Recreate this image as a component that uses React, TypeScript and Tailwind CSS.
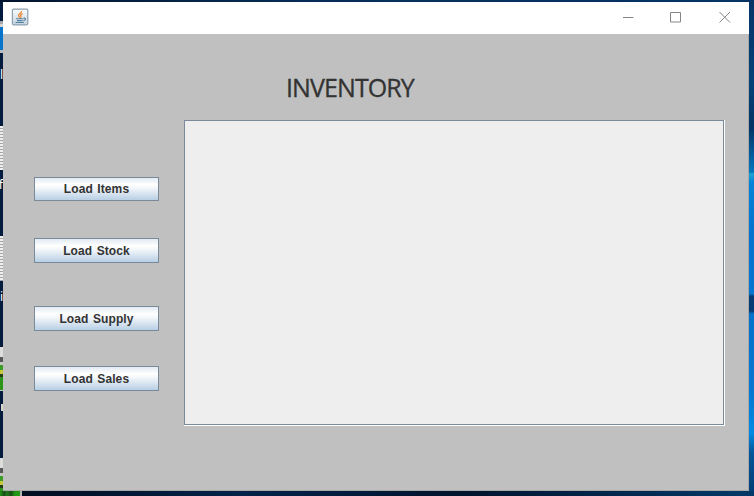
import React from "react";

function JavaIcon() {
  return (
    <svg width="18" height="18" viewBox="0 0 18 18" fill="none">
      <defs>
        <linearGradient id="tile" x1="0" y1="0" x2="0" y2="1">
          <stop offset="0" stopColor="#fafcfd" />
          <stop offset="1" stopColor="#c5d4df" />
        </linearGradient>
      </defs>
      <rect x="1.4" y="1.2" width="15.4" height="15.6" rx="1.2" fill="url(#tile)" stroke="#8ba0b0" strokeWidth="1.2" />
      <path d="M10.6 3C11.1 5.2 7 5.8 7.5 7.6C7.7 8.4 8.6 8.8 8.5 9.8M11.6 5.7C9.3 6.7 9.2 7.3 10 8.1C10.3 8.8 9.7 9.4 9.4 9.8" stroke="#e78632" strokeWidth="1.3" />
      <path d="M5 10.8H12.3M6 12.6H11.5M12.5 10.2C15.2 9.8 15 12.2 12.3 12.8M4.6 14.5H12.9" stroke="#547f9f" strokeWidth="1.1" />
    </svg>
  );
}

function TitleBar() {
  return (
    <header className="flex h-8 shrink-0 items-start justify-between bg-white pr-[18px] pl-[8px]">
      <div className="pt-[6px]"><JavaIcon /></div>
      <svg width="108" height="13" viewBox="0 0 108 13" fill="none" stroke="#858585" className="mt-[9px]">
        <path d="M0 6.5H10.5" />
        <path d="M47.5 1.5H57.5V11H47.5Z" />
        <path d="M96.5 1L107 11.5M107 1L96.5 11.5" />
      </svg>
    </header>
  );
}

function MetalButton({ children, className = "" }: { children: React.ReactNode; className?: string }) {
  return (
    <button
      className={`flex w-[125px] shrink-0 items-center justify-center border border-[#7a8a99] bg-[linear-gradient(#e1eaf3_0%,#ffffff_30%,#f4f7fa_45%,#b8cfe5_100%)] font-['Liberation_Sans',Arial,sans-serif] text-[12px] leading-none font-bold tracking-[0.1px] text-[#333333] [word-spacing:1px] ${className}`}
    >
      {children}
    </button>
  );
}

function FileSheet({ className }: { className: string }) {
  return <div className={`shrink-0 bg-[repeating-linear-gradient(#eeeeee_0px,#eeeeee_2px,#a5a5a5_2px,#a5a5a5_3px)] ${className}`} />;
}

function GreenThumb({ className }: { className: string }) {
  return (
    <div className={`flex shrink-0 flex-col ${className}`}>
      <div className="h-[10px] bg-[#dddddd]" />
      <div className="h-[5px] bg-[#56565b]" />
      <div className="h-[3px] bg-[#c7c7c7]" />
      <div className="h-[5px] bg-[#3b9d25]" />
      <div className="h-[4px] bg-[#c3c83c]" />
      <div className="h-[3px] bg-[#263d16]" />
      <div className="grow bg-[#2b9519]" />
    </div>
  );
}

function LabelSliver({ children, className }: { children: React.ReactNode; className: string }) {
  return (
    <div className={`flex shrink-0 items-center justify-end overflow-hidden bg-[#031b3d] font-['Noto_Sans',sans-serif] text-[12px] leading-none text-white ${className}`}>
      {children}
    </div>
  );
}

function DesktopLeft() {
  return (
    <div className="flex w-[3px] shrink-0 flex-col overflow-hidden bg-[#031b3d]">
      <div className="h-[19px] shrink-0" />
      <div className="h-[3px] shrink-0 bg-[#a5a7a8]" />
      <div className="h-[3px] shrink-0 bg-[#d5d5d5]" />
      <div className="h-[23px] shrink-0 bg-[#0774cb]" />
      <div className="h-[3px] shrink-0 bg-[#bbbbbb]" />
      <LabelSliver className="h-[43px]">l</LabelSliver>
      <div className="h-[30px] shrink-0" />
      <FileSheet className="h-[44px]" />
      <LabelSliver className="h-[30px]">f</LabelSliver>
      <div className="h-[36px] shrink-0" />
      <FileSheet className="h-[45px]" />
      <LabelSliver className="h-[32px]">i</LabelSliver>
      <div className="h-[34px] shrink-0" />
      <GreenThumb className="h-[43px]" />
      <div className="h-px shrink-0 bg-[#c5c5c5]" />
      <LabelSliver className="h-[32px]">
        <div className="h-[7px] w-[2px] bg-[#d9d5cf]" />
      </LabelSliver>
      <div className="h-[35px] shrink-0" />
      <GreenThumb className="h-[33px]" />
    </div>
  );
}

export default function App() {
  return (
    <div className="flex h-[496px] w-[754px] flex-col overflow-hidden bg-[#031b3d]">
      <div className="h-[2px] shrink-0 bg-[linear-gradient(90deg,#03142e_0%,#062d57_40%,#053565_100%)]" />
      <div className="flex h-[489px] shrink-0">
        <DesktopLeft />
        <div className="flex w-[746px] shrink-0 flex-col">
          <TitleBar />
          <main className="flex grow flex-col border-r border-b border-[#aaa8a6] bg-[#c0c0c0]">
            <h1 className="ml-[283px] h-[86px] w-[200px] pt-[35px] font-['Open_Sans',sans-serif] text-[25px] leading-[36px] font-normal tracking-[-0.9px] text-[#333333] [-webkit-text-stroke:0.3px_#333333]">
              INVENTORY
            </h1>
            <div className="flex">
              <nav className="flex w-[181px] shrink-0 flex-col pt-[57px] pl-[31px]">
                <MetalButton className="h-[24px]">Load Items</MetalButton>
                <MetalButton className="mt-[37px] h-[25px] pt-px">Load Stock</MetalButton>
                <MetalButton className="mt-[43px] h-[25px] pt-px">Load Supply</MetalButton>
                <MetalButton className="mt-[35px] h-[25px] pt-px">Load Sales</MetalButton>
              </nav>
              <section className="h-[306px] w-[541px] shrink-0 border-r border-b border-white">
                <div className="h-full border border-[#7a8a99] bg-[#eeeeee]" />
              </section>
            </div>
          </main>
        </div>
        <div className="w-[5px] shrink-0 bg-[linear-gradient(#043568_0px,#054277_80px,#033565_126px,#0477bd_170px,#20a5d5_172px,#0684d7_180px,#0673cf_230px,#0675d0_292px,#063c73_294px,#063c73_309px,#0672ca_312px,#0677d1_390px,#058be3_431px,#04569a_450px,#033f76_489px)]" />
      </div>
      <div className="flex h-[5px] shrink-0">
        <div className="w-[20px] bg-[linear-gradient(90deg,#209813_0px,#174c17_4px,#1e7a18_7px,#174c17_11px,#209813_15px)]" />
        <div className="w-[2px] bg-[#b4b4b4]" />
        <div className="grow bg-[linear-gradient(90deg,#020d20_0%,#03234a_30%,#02132d_60%,#033969_100%)]" />
      </div>
    </div>
  );
}
